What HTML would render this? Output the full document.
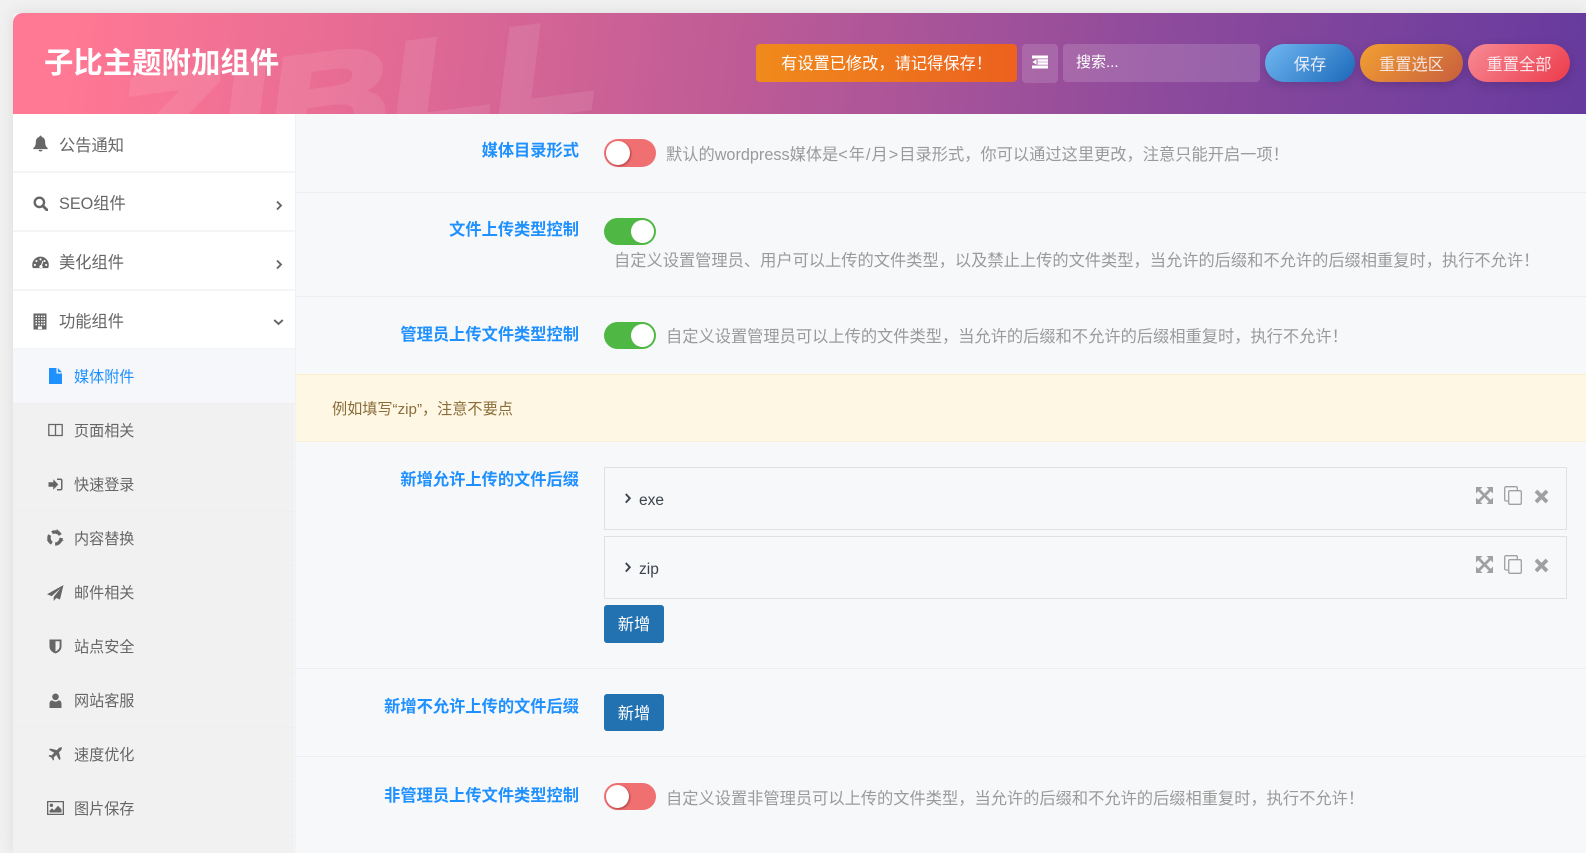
<!DOCTYPE html>
<html lang="zh-CN">
<head>
<meta charset="utf-8">
<title>子比主题附加组件</title>
<style>
*{box-sizing:border-box}
html,body{margin:0;padding:0;width:1586px;height:853px;overflow:hidden;background:#f1f1f1;font-family:"Liberation Sans","Noto Sans CJK SC",sans-serif}
.a{position:absolute}
.t{position:absolute;white-space:nowrap;line-height:20px;height:20px}
#wrap{position:absolute;left:13px;top:13px;width:1573px;height:840px;box-shadow:0 0 14px rgba(0,0,0,.09)}
#hd{position:absolute;left:13px;top:13px;width:1573px;height:101px;border-radius:10px 0 0 0;overflow:hidden;background:linear-gradient(97deg,#ff7894 4%,#e66b94 22%,#c05c96 45%,#8f4b9c 72%,#663a9e 100%)}
#wm{position:absolute;left:102px;top:49px;font:italic 700 128px/130px "Liberation Sans",sans-serif;color:#fff;-webkit-text-stroke:5px #fff;opacity:.09;transform-origin:0 50%;transform:rotate(-7.5deg) scaleX(1.34);white-space:nowrap}
#title{left:44px;top:46px;height:36px;line-height:36px;font-size:29.4px;font-weight:700;color:#fff}
.hb{position:absolute;top:44px;height:38px;color:#fff;text-align:center;line-height:38px;font-size:16.24px}
#side{position:absolute;left:13px;top:114px;width:282px;height:739px;background:#f1f1f1;border-right:1px solid #f7f7f7}
.m1{position:absolute;left:13px;width:282px;height:59px;background:#fff;border-bottom:2px solid #f4f5f6}
.m2{position:absolute;left:13px;width:282px;height:54px;border-bottom:1px solid #efefef}
#main{position:absolute;left:296px;top:114px;width:1290px;height:739px;background:#f7f8fa}
.ln{position:absolute;left:296px;width:1290px;height:1px;background:#ebedf0}
.lb{position:absolute;right:1007px;white-space:nowrap;font-size:16.24px;line-height:22px;font-weight:700;color:#1e90ff}
.ds{position:absolute;white-space:nowrap;font-size:16.24px;line-height:22px;color:#9a9a9a}
.tg{position:absolute;left:604px;width:52px;height:27px;border-radius:14px}
.tg i{position:absolute;top:2px;width:23px;height:23px;border-radius:50%;background:#fff}
.off{background:#f07072}.off i{left:2px;box-shadow:1px 1px 2px rgba(90,0,0,.45)}
.on{background:#4fb845}.on i{left:27px}
.rp{position:absolute;left:604px;width:963px;height:63px;border:1px solid #dfe1e4}
.btn{position:absolute;left:604px;width:60px;height:38px;line-height:40px;background:#2271b1;border-radius:3px;color:#fff;font-size:16.24px;text-align:center}
.st{color:#666;font-size:16.24px}
.su{color:#666;font-size:15.1px;left:74px}
svg{position:absolute;display:block}
.g{fill:#666}
.k{fill:#a0a0a0}
</style>
</head>
<body>
<div id="wrap"></div>

<div id="hd"><div id="wm">ZIBLL</div></div>
<div class="t" id="title">子比主题附加组件</div>
<div class="hb" style="left:756px;width:261px;border-radius:4px;background:linear-gradient(90deg,#f08a1c,#ec611e);line-height:40px">有设置已修改，请记得保存！</div>
<div class="hb" style="left:1022px;width:36px;height:39px;border-radius:4px;background:rgba(255,255,255,.14)"></div>
<svg style="left:1031px;top:55px" width="18" height="14" viewBox="0 0 18 14"><path fill="#fff" d="M1 .5h16v3H1zM6.500 4.300H17v2.400H6.500zM6.500 7.300H17v2.400H6.500zM1 10.500h16v3H1zM5.500 4.300v5.400L1.400 7z"/></svg>
<div class="hb" style="left:1063px;width:197px;border-radius:4px;background:rgba(255,255,255,.15);text-align:left;padding-left:13px;line-height:38px;font-size:15px">搜索...</div>
<div class="hb" style="left:1265px;width:90px;border-radius:19px;background:linear-gradient(135deg,#71b8f1,#1c69ba);box-shadow:0 3px 9px rgba(40,40,90,.25);line-height:42px;color:#e9eefb">保存</div>
<div class="hb" style="left:1360px;width:103px;border-radius:19px;background:linear-gradient(135deg,#f2a032,#c85e3e);box-shadow:0 3px 9px rgba(60,30,90,.3);line-height:43px;color:#f6e4de">重置选区</div>
<div class="hb" style="left:1468px;width:102px;border-radius:19px;background:linear-gradient(135deg,#f78b96,#ec3b4a);box-shadow:0 3px 9px rgba(60,30,90,.3);line-height:43px;color:#fbe6ea">重置全部</div>

<div id="side"></div>
<div class="m1" style="top:114px"></div>
<div class="m1" style="top:173px"></div>
<div class="m1" style="top:232px"></div>
<div class="m1" style="top:291px"></div>
<div class="m2" style="top:350px;background:#f5f7fa;height:54px"></div>
<div class="m2" style="top:404px"></div>
<div class="m2" style="top:458px"></div>
<div class="m2" style="top:512px"></div>
<div class="m2" style="top:566px"></div>
<div class="m2" style="top:620px"></div>
<div class="m2" style="top:674px"></div>
<div class="m2" style="top:728px"></div>
<div class="m2" style="top:782px"></div>

<svg style="left:32px;top:135px" width="17" height="17" viewBox="0 0 16 16"><path class="g" d="M8 .6a1.1 1.1 0 0 0-1 1.3C4.7 2.4 3.6 4.2 3.6 6.6c0 3-.9 4.6-2.4 5.800v.9h13.600v-.9c-1.500-1.200-2.400-2.800-2.400-5.800 0-2.400-1.100-4.200-3.400-4.700A1.100 1.100 0 0 0 8 .6zM6.100 14a1.950 1.950 0 0 0 3.800 0z"/></svg>
<div class="t st" style="left:59px;top:136px">公告通知</div>
<svg style="left:33px;top:196px" width="15" height="15" viewBox="0 0 16 16"><circle cx="6.800" cy="6.800" r="5" fill="none" stroke="#666" stroke-width="2.500"/><path d="M10.500 10.500l4.300 4.300" stroke="#666" stroke-width="3" stroke-linecap="round"/></svg>
<div class="t st" style="left:59px;top:194px">SEO组件</div>
<svg style="left:32px;top:254px" width="17" height="17" viewBox="0 0 16 16"><path class="g" fill-rule="evenodd" d="M8 2.500A7.800 7.800 0 0 0 .200 10.300c0 1.100.2 2.100.7 3h14.200c.5-.9.700-1.900.700-3A7.800 7.800 0 0 0 8 2.500zM8 4a1 1 0 1 1 0 2 1 1 0 0 1 0-2zM4.200 5.600a1 1 0 1 1 0 2 1 1 0 0 1 0-2zM11.800 5.600a1 1 0 1 1 0 2 1 1 0 0 1 0-2zM2.700 9.300a1 1 0 1 1 0 2 1 1 0 0 1 0-2zM13.300 9.300a1 1 0 1 1 0 2 1 1 0 0 1 0-2zM9.800 6.400l.9.300-1.300 4a1.600 1.600 0 1 1-.9-.3z"/></svg>
<div class="t st" style="left:59px;top:253px">美化组件</div>
<svg style="left:33px;top:313px" width="14" height="17" viewBox="0 0 14 17"><path class="g" fill-rule="evenodd" d="M.500.500h13v16h-13zM2.500 2.500v1.500H4V2.500zM5.300 2.500v1.500h1.500V2.500zM8 2.500v1.500h1.500V2.500zM10.500 2.500v1.500H12V2.500zM2.500 5.300v1.500H4V5.300zM5.300 5.300v1.500h1.500V5.300zM8 5.300v1.500h1.500V5.300zM10.500 5.300v1.500H12V5.300zM2.500 8v1.500H4V8zM5.300 8v1.500h1.500V8zM8 8v1.500h1.500V8zM10.500 8v1.500H12V8zM2.500 10.700v1.500H4v-1.500zM5.300 10.700v1.500h1.500v-1.500zM8 10.700v1.500h1.500v-1.500zM10.500 10.700v1.500H12v-1.500zM5 13.500V16h4v-2.500z"/></svg>
<div class="t st" style="left:59px;top:312px">功能组件</div>
<svg style="left:275px;top:200px" width="8" height="11" viewBox="0 0 8 11"><path d="M2 1.500l4 4-4 4" fill="none" stroke="#666" stroke-width="1.900"/></svg>
<svg style="left:275px;top:259px" width="8" height="11" viewBox="0 0 8 11"><path d="M2 1.500l4 4-4 4" fill="none" stroke="#666" stroke-width="1.900"/></svg>
<svg style="left:273px;top:318px" width="11" height="8" viewBox="0 0 11 8"><path d="M1.200 2l4.300 4 4.300-4" fill="none" stroke="#666" stroke-width="1.900"/></svg>

<svg style="left:48px;top:368px" width="15" height="16" viewBox="0 0 15 16"><path fill="#1e90ff" d="M1 0h7.500v5.500H14V16H1zM9.800 0L14 4.200H9.800z"/></svg>
<div class="t su" style="top:368px;color:#1e90ff">媒体附件</div>
<svg style="left:48px;top:423px" width="15" height="14" viewBox="0 0 15 14"><path fill="none" stroke="#666" stroke-width="1.300" d="M.800 1.500h13.400v11H.800zM7.500 1.500v11"/></svg>
<div class="t su" style="top:422px">页面相关</div>
<svg style="left:48px;top:478px" width="15" height="13" viewBox="0 0 15 13"><path class="g" d="M.500 4.300h4.800V1.200l5 5.300-5 5.300V8.700H.500zM9 .500h3.500a2 2 0 0 1 2 2v8a2 2 0 0 1-2 2H9v-1.500h3.200a.8.800 0 0 0 .8-.8V2.800a.8.800 0 0 0-.8-.8H9z"/></svg>
<div class="t su" style="top:476px">快速登录</div>
<svg style="left:46px;top:529px" width="18" height="18" viewBox="0 0 16 16"><circle cx="8" cy="8" r="5.400" fill="none" stroke="#666" stroke-width="3" stroke-dasharray="8.300 3"/><path class="g" d="M9.600 0l3.300 3.200-4 1.300zM15.800 10.200l-4.400 1.300 1-4.100zM.6 10.500l3.200-3.300 1.200 4.100z"/></svg>
<div class="t su" style="top:530px">内容替换</div>
<svg style="left:47px;top:585px" width="17" height="16" viewBox="0 0 17 16"><path class="g" d="M16.500 0L0 9.200l4.700 1.900L13.500 3.200 6.700 12v4l2.600-3 3.700 1.500z"/></svg>
<div class="t su" style="top:584px">邮件相关</div>
<svg style="left:49px;top:639px" width="13" height="15" viewBox="0 0 13 15"><path class="g" fill-rule="evenodd" d="M.500.500h12v7c0 3.600-3 6-6 7-3-1-6-3.400-6-7zM6.500 2.300v10.200c2-.9 4.100-2.600 4.100-5V2.300z"/></svg>
<div class="t su" style="top:638px">站点安全</div>
<svg style="left:49px;top:693px" width="13" height="15" viewBox="0 0 13 15"><circle class="g" cx="6.500" cy="3.800" r="3.300"/><path class="g" d="M.500 15v-4c0-2.200 1-3.600 2.800-3.600 1 .8 2 1.200 3.200 1.200s2.200-.4 3.200-1.200c1.800 0 2.800 1.400 2.800 3.600v4z"/></svg>
<div class="t su" style="top:692px">网站客服</div>
<svg style="left:48px;top:747px" width="15" height="15" viewBox="0 0 15 15"><path class="g" d="M14.300.700c-.9-.9-2.600-.5-3.600.5L8.800 3.100 2.300 1.500 1 2.800l5.200 3L3.600 8.400 1.500 8 .500 9l3 1.600L5.100 13.600l1-1-.4-2.100 2.600-2.600 3 5.200 1.300-1.300-1.600-6.500 1.900-1.900c1-1 1.300-2.700.4-3.600z"/></svg>
<div class="t su" style="top:746px">速度优化</div>
<svg style="left:47px;top:801px" width="17" height="14" viewBox="0 0 17 14"><path class="g" fill-rule="evenodd" d="M0 0h17v14H0zM1.300 1.300v11.400h14.400V1.300z"/><circle class="g" cx="4.400" cy="4.300" r="1.700"/><path class="g" d="M2.500 11.500V9.600l2.500-2.300 2 2L11 4.800l3.500 3.600v3.100z"/></svg>
<div class="t su" style="top:800px">图片保存</div>

<div id="main"></div>
<div class="ln" style="top:192px"></div>
<div class="ln" style="top:296px"></div>
<div class="ln" style="top:668px"></div>
<div class="ln" style="top:756px"></div>
<div class="a" style="left:296px;top:374px;width:1290px;height:68px;background:#fef7e3;border-top:1px solid #fbeecd;border-bottom:1px solid #f8efd9"></div>
<div class="t" style="left:332px;top:399px;font-size:15.15px;color:#8a6d3b;line-height:22px;height:22px">例如填写“zip”，注意不要点</div>

<div class="lb" style="top:140px">媒体目录形式</div>
<div class="tg off" style="top:139px;height:28px"><i style="width:24px;height:24px"></i></div>
<div class="ds" style="left:666px;top:144px">默认的wordpress媒体是<span style="letter-spacing:1px">&lt;年/月&gt;</span>目录形式，你可以通过这里更改，注意只能开启一项！</div>

<div class="lb" style="top:219px">文件上传类型控制</div>
<div class="tg on" style="top:218px"></div>
<div class="a" style="left:631px;top:220px;width:23px;height:23px;border-radius:50%;background:#fff"></div>
<div class="ds" style="left:614px;top:250px">自定义设置管理员、用户可以上传的文件类型，以及禁止上传的文件类型，当允许的后缀和不允许的后缀相重复时，执行不允许！</div>

<div class="lb" style="top:324px">管理员上传文件类型控制</div>
<div class="tg on" style="top:322px"><i></i></div>
<div class="ds" style="left:666px;top:326px">自定义设置管理员可以上传的文件类型，当允许的后缀和不允许的后缀相重复时，执行不允许！</div>

<div class="lb" style="top:469px">新增允许上传的文件后缀</div>
<div class="rp" style="top:467px"></div>
<div class="rp" style="top:536px"></div>
<svg style="left:624px;top:493px" width="8" height="11" viewBox="0 0 8 11"><path d="M1.800 1l4 4.300-4 4.300" fill="none" stroke="#3c4450" stroke-width="1.900"/></svg>
<svg style="left:624px;top:562px" width="8" height="11" viewBox="0 0 8 11"><path d="M1.800 1l4 4.300-4 4.300" fill="none" stroke="#3c4450" stroke-width="1.900"/></svg>
<div class="t" style="left:639px;top:490px;font-size:15.500px;line-height:22px;height:22px;color:#3c434a">exe</div>
<div class="t" style="left:639px;top:559px;font-size:15.500px;line-height:22px;height:22px;color:#3c434a">zip</div>

<svg style="left:1476px;top:487px" width="17" height="17" viewBox="0 0 17 17"><path class="k" d="M0 0h6.500L0 6.500zM17 0v6.500L10.500 0zM0 17v-6.500L6.500 17zM17 17h-6.500L17 10.500z"/><path d="M2.500 2.500l12 12M14.500 2.500l-12 12" stroke="#a0a0a0" stroke-width="2.700"/></svg>
<svg style="left:1504px;top:486px" width="18" height="19" viewBox="0 0 18 19"><path fill="none" stroke="#a0a0a0" stroke-width="1.300" d="M4.500 15H2a1.300 1.300 0 0 1-1.300-1.300V2A1.300 1.300 0 0 1 2 .7h10A1.300 1.300 0 0 1 13.300 2v2.500"/><rect x="4.700" y="4.700" width="12.600" height="13.600" rx="1.300" fill="none" stroke="#a0a0a0" stroke-width="1.300"/></svg>
<svg style="left:1534px;top:489px" width="15" height="15" viewBox="0 0 15 15"><path d="M2 2l11 11M13 2L2 13" stroke="#a0a0a0" stroke-width="3.800"/></svg>
<svg style="left:1476px;top:556px" width="17" height="17" viewBox="0 0 17 17"><path class="k" d="M0 0h6.500L0 6.500zM17 0v6.500L10.500 0zM0 17v-6.500L6.500 17zM17 17h-6.500L17 10.500z"/><path d="M2.500 2.500l12 12M14.500 2.500l-12 12" stroke="#a0a0a0" stroke-width="2.700"/></svg>
<svg style="left:1504px;top:555px" width="18" height="19" viewBox="0 0 18 19"><path fill="none" stroke="#a0a0a0" stroke-width="1.300" d="M4.500 15H2a1.300 1.300 0 0 1-1.300-1.300V2A1.300 1.300 0 0 1 2 .7h10A1.300 1.300 0 0 1 13.300 2v2.500"/><rect x="4.700" y="4.700" width="12.600" height="13.600" rx="1.300" fill="none" stroke="#a0a0a0" stroke-width="1.300"/></svg>
<svg style="left:1534px;top:558px" width="15" height="15" viewBox="0 0 15 15"><path d="M2 2l11 11M13 2L2 13" stroke="#a0a0a0" stroke-width="3.800"/></svg>

<div class="btn" style="top:605px">新增</div>

<div class="lb" style="top:696px">新增不允许上传的文件后缀</div>
<div class="btn" style="top:694px;height:37px">新增</div>

<div class="lb" style="top:785px">非管理员上传文件类型控制</div>
<div class="tg off" style="top:783px"><i></i></div>
<div class="ds" style="left:666px;top:788px">自定义设置非管理员可以上传的文件类型，当允许的后缀和不允许的后缀相重复时，执行不允许！</div>
</body>
</html>
